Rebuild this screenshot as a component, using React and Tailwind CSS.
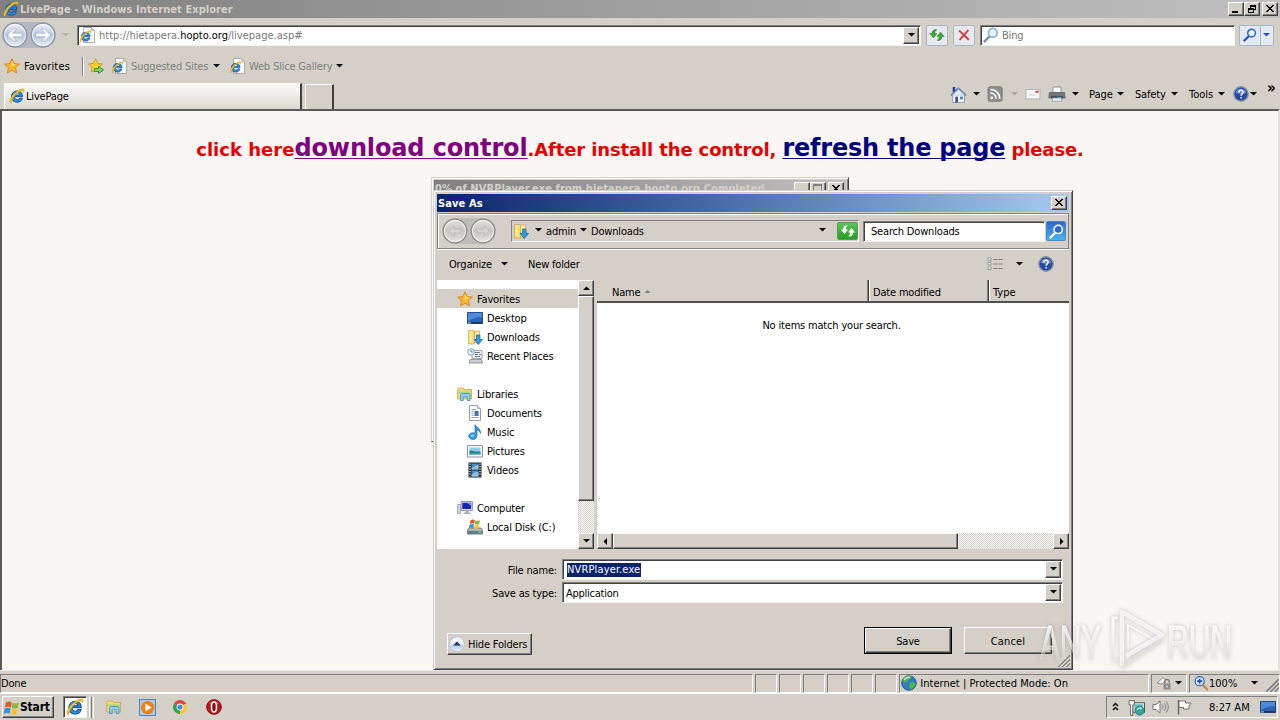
import React from "react";

const raised =
  "border border-t-white border-l-white border-b-[#404040] border-r-[#404040] shadow-[inset_-1px_-1px_0_#808080] bg-[#d4d0c8]";
const sunken =
  "border border-t-[#808080] border-l-[#808080] border-b-white border-r-white";
const field =
  "border border-t-[#808080] border-l-[#808080] border-b-[#f4f2ee] border-r-[#f4f2ee] shadow-[inset_1px_1px_0_#404040] bg-white";

function T({ className = "", pad = "pt-[2px]", children }) {
  return <span className={"block shrink-0 whitespace-nowrap " + pad + " " + className}>{children}</span>;
}

function Tri({ dir = "down", className = "text-black" }) {
  const d = {
    down: "M1 2h7L4.5 5.5z",
    up: "M1 6h7L4.5 2.5z",
    left: "M6 1v7L2.5 4.5z",
    right: "M3 1v7L6.5 4.5z",
  }[dir];
  return (
    <svg width="9" height="9" viewBox="0 0 9 9" className={"block shrink-0 " + className}>
      <path d={d} fill="currentColor" />
    </svg>
  );
}

function Svg({ w = 16, h = 16, vb, className = "", children }) {
  return (
    <svg width={w} height={h} viewBox={vb || "0 0 16 16"} className={"block shrink-0 " + className}>
      {children}
    </svg>
  );
}

function EGlyph() {
  return (
    <g>
      <path d="M13.6 8.7H5.2c.2 2 1.4 3 3 3 1.2 0 2-.5 2.5-1.4h2.7c-.7 2.5-2.7 4-5.2 4C4.800 14.300 2.500 12 2.500 8.600 2.500 5.200 4.900 2.900 8.200 2.900c3.500 0 5.600 2.300 5.400 5.800zM5.300 7h5.500c-.1-1.400-1.200-2.200-2.700-2.200-1.500 0-2.500.9-2.800 2.200z" fill="#2f8ee0" stroke="#0b4fa0" strokeWidth=".9" />
      <path d="M2.600 14.800C.2 15.600 0 12.800 2.200 9.200 5.200 4.500 11.500-.2 14.500 1c1.200.6.8 2.300.1 3.500.1-1.600-.9-2.300-2.700-1.600C8.500 4.100 3 9.600 2.600 14.800z" fill="#f2c11d" stroke="#b98a10" strokeWidth=".3" />
    </g>
  );
}
const IE = ({ s = 16, className }) => <Svg w={s} h={s} className={className}><EGlyph /></Svg>;
const PageIE = ({ className }) => (
  <Svg className={className}>
    <path d="M3.500.5h8l3 3v12h-11z" fill="#fdfdfd" stroke="#9a9a9a" strokeWidth=".8" />
    <path d="M11.500.5v3h3z" fill="#d8d8d8" stroke="#9a9a9a" strokeWidth=".5" />
    <g transform="translate(-.6 3) scale(.78)"><EGlyph /></g>
  </Svg>
);
const Star = ({ className, s = 16 }) => (
  <Svg w={s} h={s} className={className}>
    <path d="M8 .8l2.200 4.800 5.200.6-3.900 3.500 1.100 5.200L8 12.300l-4.600 2.600 1.100-5.200L.6 6.200l5.200-.6z" fill="#fbb829" stroke="#d9821a" strokeWidth=".9" />
    <path d="M8 3l1.400 3.300 3 .5-3.400 1L8 8z" fill="#ffe88a" />
  </Svg>
);
const StarAdd = () => (
  <Svg>
    <path d="M7.500.8l2.100 4.600 4.800.6-3.600 3.300 1 4.900-4.300-2.400-4.300 2.400 1-4.900L.6 6l4.800-.6z" fill="#fbd12c" stroke="#c99a1a" strokeWidth=".9" />
    <path d="M6.500 10.500h4V8.500L15.500 12l-5 3.500v-2h-4z" fill="#7fd85a" stroke="#1d7a1d" strokeWidth=".8" />
  </Svg>
);
function NavBtn({ dir, dim }) {
  return (
    <Svg w={26} h={26} vb="0 0 26 26">
      <defs>
        <linearGradient id={"nb" + dir + (dim ? "d" : "")} x1="0" y1="0" x2="0" y2="1">
          <stop offset="0" stopColor={dim ? "#e2e0dc" : "#f2f5fa"} />
          <stop offset=".5" stopColor={dim ? "#c9c7c3" : "#b4c4d8"} />
          <stop offset="1" stopColor={dim ? "#e4e2de" : "#e6f1fb"} />
        </linearGradient>
      </defs>
      <circle cx="13" cy="13" r="11.800" fill={"url(#nb" + dir + (dim ? "d" : "") + ")"} stroke={dim ? "#8b8985" : "#8792a2"} strokeWidth="1.200" />
      <circle cx="13" cy="13" r="10.500" fill="none" stroke="#fff" strokeOpacity=".7" />
      <path
        d={dim ? "M6.500 13l5.500-5.500v3.500h7v4h-7v3.500z" : "M5.500 13l6-6h3l-4 4.300h9.500v3.400h-9.500l4 4.300h-3z"}
        transform={dir === "right" ? "translate(26 0) scale(-1 1)" : undefined}
        fill={dim ? "#d6d4d0" : "#fff"}
        stroke={dim ? "#b8b6b2" : "#8c9bb0"}
        strokeWidth={dim ? ".8" : ".5"}
      />
    </Svg>
  );
}
function Mag({ handle = "#7d93ad", ring = "#8fb4d8", glass = "#e4f2fc", s = 16 }) {
  return (
    <Svg w={s} h={s}>
      <path d="M6.800 9.200L1.600 14.400" stroke={handle} strokeWidth="2.400" strokeLinecap="round" />
      <circle cx="9.800" cy="5.800" r="4.400" fill={glass} stroke={ring} strokeWidth="1.700" />
    </Svg>
  );
}
function Swap({ color, edge = "none" }) {
  return (
    <Svg>
      <path d="M.8 6.500L4.500 11 8 6.500H5.800C5.800 4.800 6.500 3.300 8 2.600 4.800 2 3 3.700 3.100 6.500z" fill={color} stroke={edge} strokeWidth=".4" />
      <path d="M15.200 9.500L11.500 5 8 9.500h2.200c0 1.700-.7 3.200-2.200 3.900 3.200.6 5-1.100 4.900-3.900z" fill={color} stroke={edge} strokeWidth=".4" />
    </Svg>
  );
}
const Help = ({ className }) => (
  <Svg className={className}>
    <circle cx="8" cy="8" r="7.200" fill="#2448a8" stroke="#8c949e" strokeWidth="1.400" />
    <path d="M2.500 6.800a5.600 5 0 0 1 11 0c-3 1.500-8 1.500-11 0z" fill="#7fa2e6" opacity=".7" />
    <path d="M5.900 6.400C5.900 3.600 10.200 3.700 10.100 6.200c0 1.600-2 1.700-2 3.600" fill="none" stroke="#fff" strokeWidth="1.500" />
    <circle cx="8.100" cy="11.700" r=".9" fill="#fff" />
  </Svg>
);
const DownArrow = () => <path d="M9.500 6h3.500v4.500h2.500L11.300 15.500 7 10.500h2.500z" fill="#2f9be2" stroke="#1263a8" strokeWidth=".7" />;
const FolderDown = () => (
  <Svg>
    <path d="M1.500 1.500h5l1 1.500v12h-6z" fill="#f6dc7a" stroke="#c8a33b" strokeWidth=".7" />
    <path d="M7.500 2h5v12h-5z" fill="#fbeea8" stroke="#c8a33b" strokeWidth=".7" />
    <path d="M3.500 2.500v11" stroke="#fff6c8" strokeWidth="1.200" />
    <DownArrow />
  </Svg>
);
const DesktopI = () => (
  <Svg>
    <path d="M.5 2.500h15v11H.5z" fill="#2b62b4" stroke="#274a7c" />
    <path d="M1 3h14v4C9 7 5 9 1 11z" fill="#4d8ad8" />
    <path d="M1 12.200h14v1.300H1z" fill="#1b2c4c" />
    <path d="M1 12.200h3v1.300H1z" fill="#65c0e8" />
  </Svg>
);
const Recent = () => (
  <Svg>
    <path d="M5 2.500h10v8H5z" fill="#eef1f4" stroke="#8a949e" strokeWidth=".8" />
    <path d="M3 11.500h11.500l1 3.500H2z" fill="#c9d0d6" stroke="#7c868f" strokeWidth=".8" />
    <path d="M8 4.500h5M8 6.500h3M12 6.500h2M8 8.500h5" stroke="#66788a" />
    <circle cx="4" cy="4" r="3.300" fill="#e9f4fb" stroke="#7a99b0" strokeWidth=".9" />
    <path d="M4 2v2h1.800" stroke="#3b6c90" fill="none" strokeWidth=".8" />
  </Svg>
);
const Lib = () => (
  <Svg>
    <path d="M.6 3.500l1-1.500h5l1 1.500h6.900v9.500H.6z" fill="#f4dc74" stroke="#bf9c3a" strokeWidth=".7" />
    <path d="M1 5.500h13.500v2H1z" fill="#a9d18a" />
    <path d="M3.500 14.500V9c0-1 .6-1.500 1.500-1.500h6.500c1 0 1.500.5 1.500 1.500v5.500h-2.800V11H6.200v3.500z" fill="#8fd0f2" stroke="#3c8cc0" strokeWidth=".8" />
  </Svg>
);
const Doc = () => (
  <Svg>
    <path d="M2.500.5h8l3 3v12h-11z" fill="#fdfdfd" stroke="#8792a2" strokeWidth=".9" />
    <path d="M10.500.5v3h3" fill="#dfe6ee" stroke="#8792a2" strokeWidth=".7" />
    <path d="M4.500 4.500H9M4.500 6.500h2M4.500 8.500h2M4.500 10.500h2M4.500 12.500h7" stroke="#7ba0cc" strokeWidth=".9" />
    <path d="M7.500 6h4v5h-4z" fill="#456fae" />
  </Svg>
);
const Music = () => (
  <Svg>
    <path d="M8 .6c1 3.200 6 3.200 5.500 8.900-.7-2.300-2-3-3.500-3.400V12a4.200 3.400 0 1 1-2-2.800z" fill="#2f9be2" stroke="#1667a8" strokeWidth=".6" />
    <ellipse cx="5.200" cy="11.600" rx="2" ry="1.200" fill="#8dd2f7" />
  </Svg>
);
const Pic = () => (
  <Svg>
    <path d="M.5 2.500h15v11.500H.5z" fill="#fafafa" stroke="#7e8a96" strokeWidth=".9" />
    <path d="M2.500 4.500h11v7.500h-11z" fill="#8fcdf0" />
    <path d="M2.500 7.500c3 0 4 1.500 11 1v3.500h-11z" fill="#1e7f86" />
    <path d="M2.500 10.500h11V12h-11z" fill="#6bb7c9" />
  </Svg>
);
const Video = () => (
  <Svg>
    <path d="M1.500.5h13v15h-13z" fill="#1c1f24" />
    <path d="M4.500 1.500h7v6h-7zM4.500 8.500h7v6h-7z" fill="#3d8fd0" />
    <path d="M4.500 6l3-1.500 4-2v5h-7zM4.500 13l4-3 3 0v4.500h-7z" fill="#8fbfe2" />
    <path d="M3 1.500v13M13 1.500v13" stroke="#fff" strokeWidth="1.200" strokeDasharray="1.200 1.300" />
  </Svg>
);
const Computer = () => (
  <Svg>
    <path d="M.6 4.500h2.800v9H.6z" fill="#d8dbe0" stroke="#838a94" strokeWidth=".7" />
    <path d="M4 1.500h11.500v9H4z" fill="#d8dbe0" stroke="#838a94" strokeWidth=".8" />
    <path d="M5.300 2.800h8.900V9H5.300z" fill="#1623b4" />
    <path d="M9.500 2.800h4.700V6z" fill="#6c86ec" />
    <path d="M8.500 10.500h3v2h2v1.500h-7v-1.500h2z" fill="#a9afb8" />
  </Svg>
);
const Flag = ({ k = 1 }) => (
  <g transform={`scale(${k})`}>
    <path d="M2.500 2.700C4.500 1.500 6 1.600 7.800 2.500L6.900 7C5.300 6.200 3.700 6.200 1.600 7.200z" fill="#e5572b" />
    <path d="M8.500 2.800c1.800.9 3.500.8 5.500-.2L13 7.200c-2 1-3.700 1-5.400.1z" fill="#86bb37" />
    <path d="M1.400 8c2-1 3.700-1 5.300-.2l-.9 4.700C4.200 11.700 2.500 11.700.5 12.700z" fill="#3f8ed8" />
    <path d="M7.400 8.100c1.800.9 3.500.8 5.500-.2l-1 4.700c-2 1-3.700 1-5.400.2z" fill="#f8c32c" />
  </g>
);
const Disk = () => (
  <Svg>
    <path d="M2 9h12l1.700 2.500v3.500H.4v-3.500z" fill="#b9c0c4" stroke="#59666b" strokeWidth=".8" />
    <path d="M1 11.800h14.500V15H1z" fill="#5c7f83" />
    <path d="M11.500 12.700h2.500v1.200h-2.500z" fill="#7dea6a" />
    <g transform="translate(1.500 -1)"><Flag k={0.82} /></g>
  </Svg>
);
const Globe = () => (
  <Svg>
    <circle cx="8" cy="8" r="7.300" fill="#2d7cc4" stroke="#1f4f86" strokeWidth=".8" />
    <path d="M3 2.800C6 .5 10 .8 11 2c-1 1.700-3 1.800-3.500 3.500C6 6 5.500 8 3.500 7.500 1.800 7 1.500 5 3 2.800zM9 8c2-1.500 5-.6 5.500 1-.6 3-3 5.300-5 5.500C8.500 12.500 7.500 9.500 9 8z" fill="#4bb848" />
    <path d="M3 5C4.500 2.800 6.500 2 9 2" stroke="#d7f0ff" strokeWidth="1.300" fill="none" opacity=".8" />
  </Svg>
);

const Sep = () => <span className="block shrink-0 w-[2px] h-[19px] border-l border-[#808080] border-r border-r-white" />;

function TitleBtn({ kind }) {
  return (
    <span className={"flex shrink-0 w-[16px] h-[14px] items-center justify-center " + raised}>
      <svg width="12" height="10" viewBox="0 0 12 10" shapeRendering="crispEdges" className="block">
        {kind === "min" && <path d="M2 7h6v2H2z" fill="#000" />}
        {kind === "restore" && <path d="M4 1h6v5H8v3H2V4h2zM5 3v1h3v1h1V3zM3 6v2h4V6z" fillRule="evenodd" fill="#000" />}
        {kind === "max" && <path d="M1 0h9v9H1zM2 2v6h7V2z" fillRule="evenodd" fill="#808080" />}
        {kind === "x" && (
          <path d="M2 1h2v1h1v1h2V2h1V1h2v1H9v1H8v1H7v1h1v1h1v1h1v1H8V7H7V6H5v1H4v1H2V7h1V6h1V5h1V4H4V3H3V2H2z" fill="#000" />
        )}
      </svg>
    </span>
  );
}

function Browser() {
  return (
    <div>
      <div className="flex h-[18px] items-center bg-linear-to-r from-[#808080] to-[#c0c0c0] pl-[3px] pr-[2px]">
        <IE />
        <T className="ml-px grow font-bold text-[#d4d0c8] tracking-[0.05px]">LivePage - Windows Internet Explorer</T>
        <TitleBtn kind="min" />
        <TitleBtn kind="restore" />
        <span className="w-[2px]" />
        <TitleBtn kind="x" />
      </div>

      <div className="flex h-[34px] items-center pl-[2px]">
        <div className="flex rounded-full bg-[#b3b8c0]">
          <NavBtn dir="left" />
          <span className="w-[2px]" />
          <NavBtn dir="right" />
        </div>
        <Tri className="ml-[5px] mr-[7px] text-[#b5b1a9]" />
        <div className={"flex h-[21px] w-[844px] items-center pl-[2px] pr-[1px] " + field}>
          <PageIE />
          <T className="ml-[3px] grow text-[#777] tracking-[0.01px]">
            http://hietapera.<span className="text-black">hopto.org</span>/livepage.asp#
          </T>
          <span className={"flex h-[17px] w-[16px] items-center justify-center " + raised}><Tri /></span>
        </div>
        <span className="ml-[5px] flex h-[21px] w-[22px] items-center justify-center rounded-[2px] border border-[#a9b4c4] bg-[#e6eaf0]">
          <Swap color="#3fa535" edge="#1d6f1d" />
        </span>
        <span className="ml-[5px] flex h-[21px] w-[22px] items-center justify-center rounded-[2px] border border-[#a9b4c4] bg-[#e6eaf0]">
          <Svg w={14} h={14}><path d="M2.500 3L13.500 13.500M13 2.500L3 13.500" stroke="#cf4040" strokeWidth="2.300" /></Svg>
        </span>
        <div className={"ml-[5px] flex h-[21px] w-[255px] items-center pl-[2px] " + field}>
          <Mag />
          <T className="ml-[3px] text-[#777]">Bing</T>
        </div>
        <div className="ml-[4px] flex h-[21px] w-[35px] items-center rounded-[2px] border border-[#a9b4c4] bg-[#e3eaf5]">
          <span className="flex h-full w-[21px] items-center justify-center border-r border-[#a9b4c4]">
            <Mag handle="#1e4fc0" ring="#2a62d4" glass="#eaf3ff" s={14} />
          </span>
          <Tri className="ml-px text-[#2558b8]" />
        </div>
      </div>

      <div className="flex h-[28px] items-center pl-[4px]">
        <Star />
        <T className="ml-[4px] w-[58px] tracking-[0.15px]">Favorites</T>
        <Sep />
        <span className="w-[4px]" />
        <StarAdd />
        <span className="w-[8px]" />
        <PageIE />
        <T className="ml-[3px] w-[81px] text-[#808080]">Suggested Sites</T>
        <Tri />
        <span className="w-[9px]" />
        <PageIE />
        <T className="ml-[3px] w-[86px] text-[#808080]">Web Slice Gallery</T>
        <Tri />
      </div>

      <div className="flex h-[29px] items-end pl-[4px]">
        <div className="flex h-[26px] w-[298px] items-center border-l border-t border-white border-r-2 border-r-[#404040] bg-linear-to-b from-[#fbfaf9] to-[#dcd9d2] pl-[4px] pb-px">
          <IE />
          <T className="ml-px">LivePage</T>
        </div>
        <div className="ml-[3px] h-[25px] w-[29px] border-l border-t border-white border-r-2 border-r-[#404040]" />
        <div className="ml-[616px] mb-[5px] flex h-[20px] items-center">
          <Svg w={17} h={17}>
            <path d="M2.500 8.500h11v7h-11z" fill="#f3f5f8" stroke="#7c8798" strokeWidth=".7" />
            <path d="M2 9l6-6 6 6z" fill="#e3e9f3" />
            <path d="M.8 9L8 2l7.200 7" fill="none" stroke="#6c88c4" strokeWidth="1.600" />
            <path d="M2.500 1H5v3.500L2.500 6z" fill="#2d3f9a" />
            <path d="M5 10h2.500v5.500H5z" fill="#2d4f9a" /><path d="M9.500 10h2.500v2.500H9.500z" fill="#3b78c8" />
          </Svg>
          <span className="w-[5px]" /><Tri />
          <span className="w-[6px]" />
          <Svg>
            <path d="M3 .8h10.500a2 2 0 0 1 1.700 2v10.500a2 2 0 0 1-2 2H3a2 2 0 0 1-2-2V2.800a2 2 0 0 1 2-2z" fill="#8f8f8f" stroke="#6f6f6f" strokeWidth=".8" />
            <circle cx="4.800" cy="11.800" r="1.400" fill="#fff" />
            <path d="M3.500 7a5.500 5.500 0 0 1 5.600 5.900M3.500 3.500a9 9 0 0 1 9.200 9.400" fill="none" stroke="#fff" strokeWidth="1.600" />
          </Svg>
          <span className="w-[7px]" /><Tri className="text-[#aaa69e]" />
          <span className="w-[6px]" />
          <Svg>
            <path d="M1 3.500h14v9.500H1z" fill="#f6f6f6" stroke="#b5b5b5" />
            <path d="M10.500 4.800h3.200v2h-3.200z" fill="#c94a3f" /><path d="M4 9h6" stroke="#d0d0d0" />
          </Svg>
          <span className="w-[7px]" />
          <Svg w={18} h={16} vb="0 0 18 16">
            <path d="M5 1h8v6H5z" fill="#fff" stroke="#8e949c" />
            <path d="M1.500 6.500h15l.7 5.500H.8z" fill="#71767e" stroke="#565b62" strokeWidth=".7" />
            <path d="M3 10h12v2.500H3z" fill="#4b4f55" />
            <path d="M4.500 12h9v3.500h-9z" fill="#dcecf6" stroke="#8e949c" strokeWidth=".7" />
            <path d="M10 11.500h3" stroke="#4ab0d8" />
          </Svg>
          <span className="w-[5px]" /><Tri />
          <T className="ml-[9px] w-[27px] tracking-[0px]">Page</T><Tri />
          <T className="ml-[10px] w-[35px]">Safety</T><Tri />
          <T className="ml-[10px] w-[28px] tracking-[0px]">Tools</T><Tri />
          <span className="w-[7px]" /><Help /><Tri />
          <T className="ml-[9px] -mt-[15px] text-[15px] font-bold">»</T>
        </div>
      </div>

      <div className="flex h-[561px] justify-center border-l-2 border-t-2 border-l-[#5a5a5a] border-t-[#5a5a5a] border-r-2 border-r-[#e4e1da] bg-[#f9f6f3] pt-[19px]">
        <h1 className="h-[36px] whitespace-nowrap font-['DejaVu_Sans',sans-serif] text-[18px] font-bold leading-[36px] tracking-[0.02px] text-[#e80000]">
          click here
          <span className="text-[24px] tracking-[-0.13px] text-[#800080] underline decoration-1 underline-offset-[2px] [text-decoration-skip-ink:none]">download control</span>
          <span className="tracking-[-0.13px]">.After install the control, </span>
          <span className="text-[24px] tracking-[-0.22px] text-[#000080] underline decoration-1 underline-offset-[2px] [text-decoration-skip-ink:none]">refresh the page</span>
          <span className="tracking-[-0.12px]"> please.</span>
        </h1>
      </div>
    </div>
  );
}

function Rear() {
  return (
    <div className="absolute left-[431px] top-[177px] h-[265px] w-[418px] border border-[#d4d0c8] border-r-[#404040] border-b-[#404040] bg-[#d4d0c8] p-[2px] shadow-[inset_1px_1px_0_#fff,inset_-1px_-1px_0_#808080]">
      <div className="flex h-[17px] items-center bg-linear-to-r from-[#808080] to-[#c0c0c0] pl-px pr-[2px]">
        <T pad="pt-0" className="grow font-bold text-[#d4d0c8] tracking-[0.09px]">0% of NVRPlayer.exe from hietapera.hopto.org Completed</T>
        <TitleBtn />
        <TitleBtn kind="max" />
        <span className="w-[2px]" />
        <TitleBtn kind="x" />
      </div>
    </div>
  );
}

function TreeRow({ icon, label, deep, sel }) {
  return (
    <div className={"flex h-[19px] items-center " + (deep ? "pl-[30px] " : "pl-[20px] ") + (sel ? "bg-[#d4d0c8]" : "")}>
      {icon}
      <T className="ml-[4px]">{label}</T>
    </div>
  );
}

const checker = "bg-[repeating-conic-gradient(#fff_0_25%,#d4d0c8_0_50%)] bg-[length:2px_2px]";

function ComboBtn() {
  return <span className={"flex h-[17px] w-[16px] items-center justify-center " + raised}><Tri /></span>;
}

const ColSep = () => <span className="-mt-[2px] block h-[21px] w-[3px] border-l border-r border-l-[#808080] border-r-white bg-[#404040]" />;

function SaveAs() {
  return (
    <div className="absolute left-[433px] top-[190px] h-[480px] w-[640px] border border-[#d4d0c8] border-r-[#404040] border-b-[#404040] bg-[#d4d0c8] p-[3px] shadow-[inset_1px_1px_0_#fff,inset_-1px_-1px_0_#808080]">
      <div className="flex h-[18px] items-center bg-linear-to-r from-[#0a246a] to-[#a6caf0] pl-px pr-[2px]">
        <T className="grow font-bold text-white tracking-[0.12px]">Save As</T>
        <TitleBtn kind="x" />
      </div>
      <div className="mt-[1px] flex h-[36px] items-center border border-[#808080] pl-[4px] shadow-[inset_1px_1px_0_#fff,0_1px_0_#fff]">
        <div className="flex rounded-full bg-[#bfbdb9]">
          <NavBtn dir="left" dim />
          <span className="w-[2px]" />
          <NavBtn dir="right" dim />
        </div>
        <div className={"ml-[15px] flex h-[22px] w-[348px] items-center pb-px pl-px " + sunken}>
          <FolderDown />
          <span className="w-[5px]" /><Tri />
          <T className="ml-[3px] w-[33px]">admin</T><Tri />
          <T className="ml-[3px] grow">Downloads</T>
          <Tri />
          <span className="w-[10px]" />
          <span className="flex h-[18px] w-[21px] items-center justify-center rounded-[2px] border border-[#5a9a5a] bg-linear-to-b from-[#5cc25c] to-[#1fa01f]">
            <Swap color="#fff" />
          </span>
        </div>
        <div className={"ml-[4px] flex h-[21px] w-[182px] items-center pl-[7px] " + field}>
          <T>Search Downloads</T>
        </div>
        <span className="ml-px flex h-[20px] w-[20px] items-center justify-center rounded-[2px] border border-[#4a86c8] bg-linear-to-b from-[#2c66d0] to-[#4db4f0]">
          <Mag handle="#fff" ring="#fff" glass="#2c66d0" s={15} />
        </span>
      </div>
      <div className="flex h-[30px] items-center pl-[12px]">
        <T className="w-[51px]">Organize</T><Tri />
        <T className="ml-[19px] grow">New folder</T>
        <Svg w={16} h={14} vb="0 0 16 14">
          <path d="M1 1h3v2.500H1zM1 5.500h3V8H1zM1 10h3v2.500H1z" fill="#fff" stroke="#7a8490" strokeWidth=".8" />
          <path d="M6.500 2.500h4M11.500 2.500h4M6.500 7h4M11.500 7h4M6.500 11.500h4M11.500 11.500h4" stroke="#7a7a7a" />
        </Svg>
        <span className="w-[12px]" /><Tri /><span className="w-[14px]" />
        <Help className="mr-[15px]" />
      </div>
      <div className="mt-px flex h-[269px]">
        <div className="w-[141px] bg-white pt-[9px]">
          <TreeRow icon={<Star />} label="Favorites" sel />
          <TreeRow icon={<DesktopI />} label="Desktop" deep />
          <TreeRow icon={<FolderDown />} label="Downloads" deep />
          <TreeRow icon={<Recent />} label="Recent Places" deep />
          <div className="h-[19px]" />
          <TreeRow icon={<Lib />} label="Libraries" />
          <TreeRow icon={<Doc />} label="Documents" deep />
          <TreeRow icon={<Music />} label="Music" deep />
          <TreeRow icon={<Pic />} label="Pictures" deep />
          <TreeRow icon={<Video />} label="Videos" deep />
          <div className="h-[19px]" />
          <TreeRow icon={<Computer />} label="Computer" />
          <TreeRow icon={<Disk />} label="Local Disk (C:)" deep />
        </div>
        <div className={"flex w-[16px] flex-col " + checker}>
          <span className={"flex h-[16px] items-center justify-center " + raised}><Tri dir="up" /></span>
          <span className={"h-[205px] " + raised} />
          <span className="grow" />
          <span className={"flex h-[16px] items-center justify-center " + raised}><Tri /></span>
        </div>
        <div className="ml-[3px] flex w-[472px] flex-col bg-white">
          <div className="flex h-[23px] items-center border-b-2 border-[#505050] bg-[#d4d0c8] pt-[2px]">
            <T className="ml-[15px]">Name</T>
            <Svg w={7} h={5} vb="0 0 7 5" className="ml-[4px]"><path d="M0.500 4L3.500 1l3 3z" fill="#808080" /></Svg>
            <span className="grow" />
            <ColSep />
            <T className="ml-[3px] w-[114px]">Date modified</T>
            <ColSep />
            <T className="ml-[3px] w-[76px] tracking-[0px]">Type</T>
          </div>
          <div className="flex grow justify-center pt-[14px]"><T className="-ml-[3px]">No items match your search.</T></div>
          <div className={"flex h-[16px] " + checker}>
            <span className={"flex w-[16px] items-center justify-center " + raised}><Tri dir="left" /></span>
            <span className={"w-[345px] " + raised} />
            <span className="grow" />
            <span className={"flex w-[16px] items-center justify-center " + raised}><Tri dir="right" /></span>
          </div>
        </div>
      </div>
      <div className="mt-[10px] flex h-[21px] items-center">
        <T className="w-[120px] text-right">File name:</T>
        <div className={"ml-[5px] flex h-[21px] w-[501px] items-center pl-[4px] pr-px " + field}>
          <span className="block whitespace-nowrap bg-[#0a246a] pr-px text-white tracking-[0.14px]">NVRPlayer.exe</span>
          <span className="grow" /><ComboBtn />
        </div>
      </div>
      <div className="mt-[2px] flex h-[21px] items-center">
        <T className="w-[120px] text-right">Save as type:</T>
        <div className={"ml-[5px] flex h-[21px] w-[501px] items-center pl-[3px] pr-px " + field}>
          <T className="grow tracking-[-0.25px]">Application</T><ComboBtn />
        </div>
      </div>
      <div className="mt-[24px] flex">
        <span className={"ml-[10px] mt-[6px] flex h-[22px] w-[85px] items-center pl-px " + raised}>
          <Svg>
            <circle cx="8" cy="8" r="7.300" fill="#eef4fb" stroke="#b4c0d0" strokeWidth=".9" />
            <path d="M1.200 9a7 6 0 0 0 13.600 0z" fill="#c3d4ea" />
            <path d="M4 9.500L8 5.500l4 4z" fill="#223a6a" />
          </Svg>
          <T className="ml-[3px]">Hide Folders</T>
        </span>
        <span className="ml-[332px] flex h-[27px] w-[88px] border border-black">
          <span className={"flex grow items-center justify-center " + raised}><T>Save</T></span>
        </span>
        <span className={"ml-[12px] flex h-[27px] w-[88px] items-center justify-center " + raised}><T className="tracking-[0.15px]">Cancel</T></span>
      </div>
      <svg width="12" height="12" viewBox="0 0 12 12" className="absolute bottom-[2px] right-[2px]">
        <path d="M0 12L12 0M4 12l8-8M8 12l4-4" stroke="#808080" strokeWidth="1.600" />
        <path d="M-1.500 12L12-1.500M2.500 12L12 2.500M6.500 12L12 6.500" stroke="#fff" strokeWidth=".8" />
      </svg>
    </div>
  );
}

function Status() {
  return (
    <div className="flex h-[23px] items-center border-t border-[#ece9e4] pt-[2px]">
      <div className={"flex h-[19px] w-[754px] items-center " + sunken}><T>Done</T></div>
      {[0, 1, 2, 3, 4, 5].map((i) => (
        <div key={i} className={"ml-[2px] h-[19px] w-[22px] " + sunken} />
      ))}
      <div className={"ml-[2px] flex h-[19px] w-[250px] items-center pl-[1px] " + sunken}>
        <Globe />
        <T className="ml-[3px] tracking-[0.03px]">Internet | Protected Mode: On</T>
      </div>
      <div className={"ml-[2px] flex h-[19px] w-[36px] items-center pl-[4px] " + sunken}>
        <Svg>
          <path d="M1 8l6-5.500 3 3L6 9z" fill="#eee" stroke="#888" strokeWidth=".9" />
          <path d="M7.500 8.500h7v6h-7z" fill="#8d8d8d" /><path d="M8.800 8.500V6.500a2.200 2.200 0 0 1 4.400 0v2" fill="none" stroke="#777" strokeWidth="1.200" />
          <path d="M10.500 10.500h1v2h-1z" fill="#fff" />
        </Svg>
        <span className="w-[2px]" /><Tri />
      </div>
      <div className={"ml-[2px] flex h-[19px] grow items-center pl-[4px] " + sunken}>
        <Svg w={15} h={15}>
          <path d="M9 9l5 5.500" stroke="#c08a50" strokeWidth="2.400" strokeLinecap="round" />
          <circle cx="6" cy="5.500" r="4.800" fill="#dcecff" stroke="#2a66c4" strokeWidth="1.300" />
          <path d="M6 2.800v5.400M3.300 5.500h5.400" stroke="#1c50b0" strokeWidth="1.800" />
        </Svg>
        <T className="w-[41px] tracking-[0px]">100%</T>
        <Tri />
        <Svg w={13} h={13} vb="0 0 12 12" className="ml-[7px] mt-[4px]">
          <path d="M0 12L12 0M4 12l8-8M8 12l4-4" stroke="#808080" strokeWidth="1.500" />
        </Svg>
      </div>
    </div>
  );
}

function Taskbar() {
  return (
    <div className="flex h-[27px] items-center border-t border-white">
      <div className={"ml-[2px] flex h-[22px] w-[52px] items-center " + raised}>
        <Svg w={17} h={17} vb="0 0 15 14"><Flag /></Svg>
        <T pad="pt-0" className="text-[12px] font-bold">Start</T>
      </div>
      <div className={"ml-[9px] flex h-[22px] w-[24px] items-center justify-center " + field}>
        <IE s={18} />
      </div>
      <span className="ml-[2px] h-[21px] w-px bg-white" /><span className="ml-px h-[21px] w-px bg-[#808080]" /><span className="ml-px h-[21px] w-px bg-white" />
      <span className="w-[12px]" /><Lib />
      <span className="w-[17px]" />
      <Svg w={17} h={17}>
        <path d="M.5.5h15v15H.5z" fill="#a8cdf0" stroke="#4e86c0" />
        <circle cx="8" cy="8" r="6.200" fill="#f07f14" />
        <path d="M6 4.200l6 3.800-6 3.800z" fill="#fff" />
      </Svg>
      <span className="w-[16px]" />
      <Svg>
        <path d="M8 8L1.940 4.500A7 7 0 0 1 14.060 4.500z" fill="#dd4636" />
        <path d="M8 8L1.940 4.500A7 7 0 0 0 8 15z" fill="#2fa24c" />
        <path d="M8 8l6.060-3.500A7 7 0 0 1 8 15z" fill="#fbc92f" />
        <path d="M8 4.500h6.100" stroke="#dd4636" /><circle cx="8" cy="8" r="3.400" fill="#fff" /><circle cx="8" cy="8" r="2.600" fill="#4a86e8" />
      </Svg>
      <span className="w-[18px]" />
      <Svg>
        <circle cx="8" cy="8" r="7.400" fill="#c01318" stroke="#6e0a0c" strokeWidth=".8" />
        <path d="M3 4.500a6.500 6 0 0 1 10 0c-3 2-7 2-10 0z" fill="#ee7a74" opacity=".6" />
        <ellipse cx="8" cy="8" rx="2.500" ry="5" fill="#7d0a0e" stroke="#fff" strokeWidth="1.600" />
      </Svg>
      <div className={"ml-auto mr-[2px] flex h-[22px] w-[172px] items-center pl-[4px] " + sunken}>
        <Svg w={9} h={12} vb="0 0 9 12"><path d="M2 5L4.500 2.500 7 5M2 9l2.500-2.500L7 9" fill="none" stroke="#000" strokeWidth="1.400" /></Svg>
        <span className="w-[8px]" />
        <Svg w={17} h={17}>
          <path d="M4.500 3.500h11v9h-11z" fill="#e6f2f2" stroke="#4b5a60" />
          <path d="M6 5h8v6H6z" fill="#63b8b0" />
          <path d="M1 1.500h5v4H4.500v10h-2v-10H1z" fill="#fff" stroke="#555" strokeWidth=".8" />
          <circle cx="11" cy="11" r="4.200" fill="#37a79c" stroke="#1f6f74" strokeWidth=".7" />
          <path d="M8.500 10c1.500-2 3.500-2 4.500-.5" stroke="#d8f4ee" strokeWidth="1.100" fill="none" />
        </Svg>
        <span className="w-[7px]" />
        <Svg w={17} h={16} vb="0 0 17 16">
          <path d="M1 5.500h3L8 2v12l-4-3.500H1z" fill="#fff" stroke="#707070" />
          <path d="M10 5.500c1.200 1.300 1.200 3.700 0 5M12 4c2.200 2 2.200 6 0 8M14 2.500c3 3 3 8 0 11" fill="none" stroke="#808080" />
        </Svg>
        <span className="w-[7px]" />
        <Svg w={17} h={16} vb="0 0 17 16">
          <path d="M2.500 1v14.500" stroke="#606060" strokeWidth="1.400" />
          <path d="M3 2h6.500v2H15l-2 3 0 3H7.500V8.500H3z" fill="#fff" stroke="#707070" />
        </Svg>
        <T className="ml-[16px] w-[51px] tracking-[0px]">8:27 AM</T>
        <DesktopI />
      </div>
    </div>
  );
}

function Watermark() {
  return (
    <svg width="240" height="90" viewBox="0 0 240 90" className="absolute left-[1036px] top-[607px] drop-shadow-[0_0_2px_rgba(110,110,110,0.5)]">
      <defs>
        <linearGradient id="wm" gradientUnits="userSpaceOnUse" x1="0" y1="14" x2="0" y2="54">
          <stop offset="0" stopColor="#fff" stopOpacity=".9" />
          <stop offset=".5" stopColor="#fff" stopOpacity=".55" />
          <stop offset="1" stopColor="#e2e0dd" stopOpacity=".35" />
        </linearGradient>
      </defs>
      <g fill="url(#wm)" stroke="url(#wm)" strokeWidth=".8" fontFamily="'Liberation Sans', sans-serif" fontSize="49">
        <text x="4" y="52" textLength="61" lengthAdjust="spacingAndGlyphs">ANY</text>
        <text x="131" y="52" textLength="65" lengthAdjust="spacingAndGlyphs">RUN</text>
      </g>
      <g fill="none" stroke="url(#wm)" strokeLinejoin="round">
        <path d="M86 59V5l40 23-36 21" strokeWidth="4.500" stroke="#fff" strokeOpacity=".7" />
        <path d="M92 48V18l26 15" strokeWidth="2" />
        <path d="M85 60l42-28" strokeWidth="4" stroke="#e8e6e3" strokeOpacity=".6" />
        <path d="M82 11h-5v43h5" strokeWidth="3" />
      </g>
    </svg>
  );
}

export default function App() {
  return (
    <div className="relative h-[720px] w-[1280px] overflow-hidden bg-[#d4d0c8] font-['DejaVu_Sans_Condensed','DejaVu_Sans',sans-serif] text-[11px] leading-[14px] tracking-[-0.18px] text-black">
      <Browser />
      <Status />
      <Taskbar />
      <Rear />
      <SaveAs />
      <Watermark />
    </div>
  );
}
